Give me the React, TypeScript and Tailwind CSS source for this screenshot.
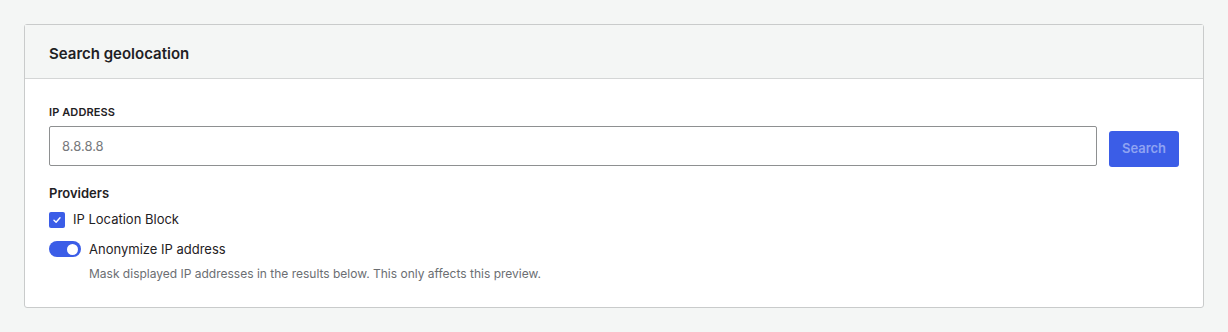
export default function App() {
  return (
    <div className="min-h-[332px] w-full bg-[#f4f6f5] p-6" style={{ fontFamily: "Inter, 'Noto Sans', sans-serif" }}>
      <section className="rounded-[3px] border border-[#c9cbcb] bg-white">
        <div className="flex h-[54px] items-center border-b border-[#d4d6d6] bg-[#f4f6f5] px-6 pt-[5px]">
          <h2 className="text-[15px] font-semibold text-[#1f2124]">Search geolocation</h2>
        </div>
        <div className="px-6 pt-[25px] pb-[24px]">
          <label className="block text-[11px] font-semibold uppercase tracking-[0.01em] text-[#1f2124]">IP Address</label>
          <div className="mt-[5px] flex items-end gap-3">
            <input
              className="h-[40px] flex-1 rounded-[2px] border border-[#8e9091] px-[12px] text-[13px] text-[#55575a] placeholder:text-[#77797c] outline-none"
              placeholder="8.8.8.8"
            />
            <button className="mb-[-1px] h-[36px] w-[70px] rounded-[3px] bg-[#3b5de7] text-[13px] font-semibold text-[#8fa3f2]">
              Search
            </button>
          </div>
          <div className="mt-[18px] text-[13px] font-semibold text-[#1f2124]">Providers</div>
          <div className="mt-[7px] flex items-center gap-[8px]">
            <span className="flex h-[16px] w-[16px] items-center justify-center rounded-[2px] bg-[#3b5de7]">
              <svg width="10" height="10" viewBox="0 0 10 10" fill="none">
                <path d="M2 5.2 L4.1 7.2 L8 2.8" stroke="white" strokeWidth="1.4" strokeLinecap="round" strokeLinejoin="round" />
              </svg>
            </span>
            <span className="text-[13px] text-[#1f2124]">IP Location Block</span>
          </div>
          <div className="mt-[10px] flex items-center gap-[8px]">
            <span className="relative flex h-[16px] w-[32px] items-center rounded-full bg-[#3b5de7]">
              <span className="absolute right-[3px] h-[11px] w-[11px] rounded-full bg-white" />
            </span>
            <span className="text-[13px] text-[#1f2124]">Anonymize IP address</span>
          </div>
          <p className="mt-[6px] pl-[40px] text-[12px] text-[#6b6e72]">
            Mask displayed IP addresses in the results below. This only affects this preview.
          </p>
        </div>
      </section>
    </div>
  );
}
